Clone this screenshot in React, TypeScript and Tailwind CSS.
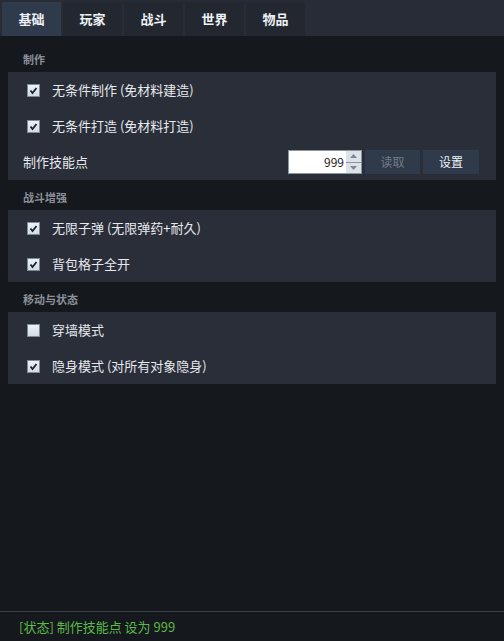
import { useState } from "react";

const font = { fontFamily: '"Noto Sans CJK SC", "Noto Sans", sans-serif' };

const tabs = ["基础", "玩家", "战斗", "世界", "物品"];

const Check = ({ checked }: { checked: boolean }) => (
  <span className="flex h-[13px] w-[13px] items-center justify-center border border-[#7d8a9b] bg-gradient-to-b from-[#eef2f6] to-[#d3dbe4]">
    {checked && (
      <svg width="9" height="9" viewBox="0 0 9 9">
        <path d="M1.5 4.5 L3.5 7 L7.5 2" fill="none" stroke="#1c2330" strokeWidth="1.8" />
      </svg>
    )}
  </span>
);

const Row = ({ label, checked }: { label: string; checked: boolean }) => (
  <div className="flex h-[36px] items-center gap-[12px] pl-[19px]">
    <Check checked={checked} />
    <span className="text-[13px] text-[#e6e9ee]">{label}</span>
  </div>
);

const Section = ({ title, children }: { title: string; children: React.ReactNode }) => (
  <div>
    <div className="flex h-[30px] items-end pb-[5px] pl-[23px] text-[11px] font-bold text-[#8b9099]">{title}</div>
    <div className="mx-[8px] bg-[#2a2e38]">{children}</div>
  </div>
);

export default function App() {
  const [active] = useState(0);
  return (
    <div style={font} className="flex h-[641px] w-[504px] flex-col bg-[#15181d]">
      {/* tabs */}
      <div className="flex h-[36px] gap-[2px] bg-[#272c36] pl-[2px]">
        {tabs.map((t, i) => (
          <div
            key={t}
            className={`mt-[2px] flex w-[59px] items-center justify-center text-[13px] font-bold text-[#eef1f5] ${
              i === active ? "bg-[#2f3a4b]" : "bg-[#232830]"
            }`}
          >
            {t}
          </div>
        ))}
      </div>

      <div className="flex-1 pt-[6px]">
        <Section title="制作">
          <Row label="无条件制作 (免材料建造)" checked />
          <Row label="无条件打造 (免材料打造)" checked />
          <div className="flex h-[36px] items-center pl-[15px] pr-[17px]">
            <span className="flex-1 text-[13px] text-[#e6e9ee]">制作技能点</span>
            <div className="flex h-[24px] w-[74px] border border-[#8895a4] bg-white">
              <input
                defaultValue="999"
                className="w-0 flex-1 bg-white pr-[2px] text-right text-[12px] text-[#1a1a1a] outline-none"
                style={font}
              />
              <div className="flex w-[15px] flex-col gap-[1px] bg-[#8895a4]">
                <div className="flex flex-1 items-center justify-center bg-[#dde2e8]">
                  <svg width="7" height="4" viewBox="0 0 7 4"><path d="M0 4 L3.5 0 L7 4 Z" fill="#7d8794" /></svg>
                </div>
                <div className="flex flex-1 items-center justify-center bg-[#dde2e8]">
                  <svg width="7" height="4" viewBox="0 0 7 4"><path d="M0 0 L3.5 4 L7 0 Z" fill="#7d8794" /></svg>
                </div>
              </div>
            </div>
            <button className="ml-[3px] h-[24px] w-[55px] bg-[#2f3a4b] text-[12px] text-[#747b86]">读取</button>
            <button className="ml-[3px] h-[24px] w-[56px] bg-[#2f3a4b] text-[12px] text-[#eef1f5]">设置</button>
          </div>
        </Section>

        <Section title="战斗增强">
          <Row label="无限子弹 (无限弹药+耐久)" checked />
          <Row label="背包格子全开" checked />
        </Section>

        <Section title="移动与状态">
          <Row label="穿墙模式" checked={false} />
          <Row label="隐身模式 (对所有对象隐身)" checked />
        </Section>
      </div>

      <div className="flex h-[30px] items-center border-t border-[#3a3f48] pl-[19px] text-[13px] text-[#5cb848]">
        [状态] 制作技能点 设为 999
      </div>
    </div>
  );
}
